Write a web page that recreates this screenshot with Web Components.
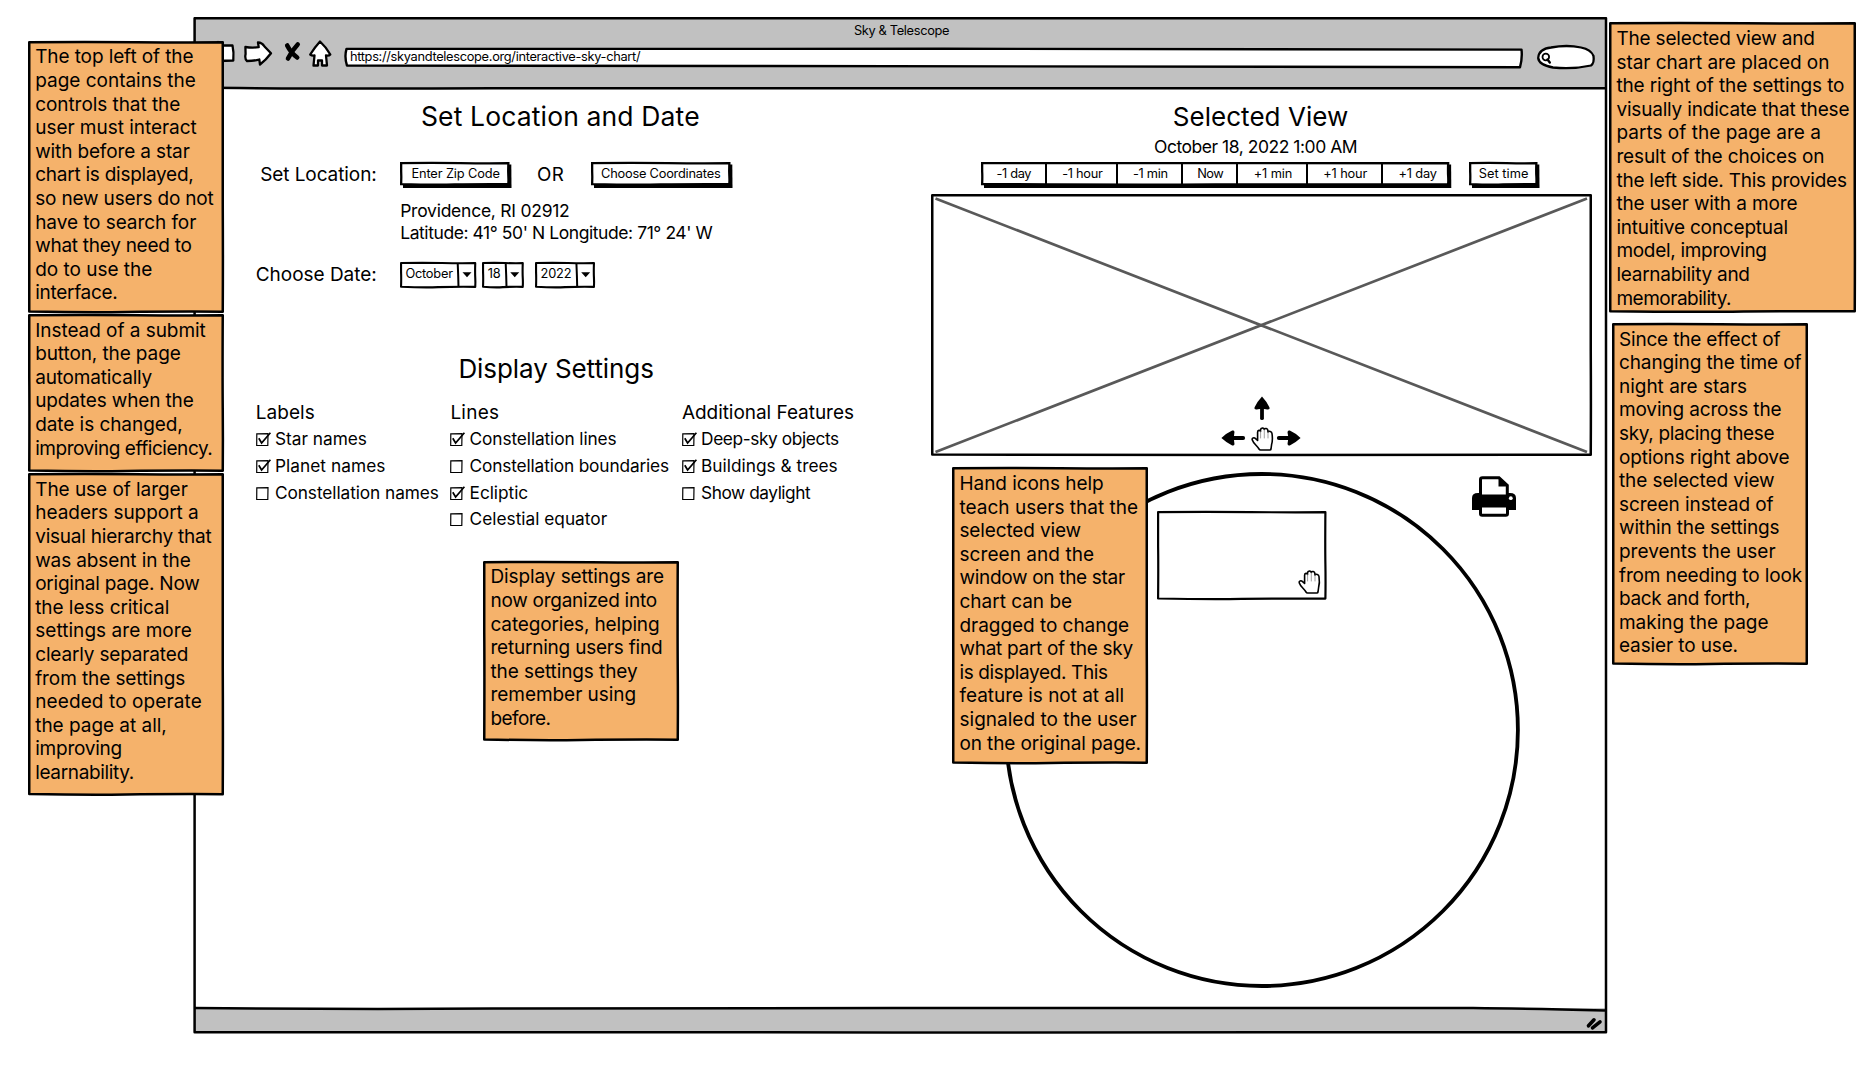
<!DOCTYPE html>
<html lang="en">
<head>
<meta charset="utf-8">
<title>Sky &amp; Telescope wireframe</title>
<style>
html,body{margin:0;padding:0;background:#fff;color:#000;font-family:Inter,"Noto Sans",sans-serif;overflow:hidden}
</style>
</head>
<body>
<wire-board></wire-board>
<script>
// Slightly wavy closed rectangle outline, inset by half a stroke.
function sketchRect(w, h, s) {
  const i = s / 2, r = w - i, b = h - i;
  return `M${i} ${i} Q${w * .3} ${i - .4} ${w * .55} ${i} T${r} ${i + .1} Q${r - .3} ${h * .4} ${r} ${h * .6} T${r} ${b - .1} Q${w * .7} ${b - .3} ${w * .5} ${b + .2} T${i} ${b - .2} Q${i + .3} ${h * .6} ${i} ${h * .4} Z`;
}
function define(name, render) {
  customElements.define(name, class extends HTMLElement {
    connectedCallback() {
      if (this.shadowRoot) return;
      this.attachShadow({ mode: 'open' }).innerHTML = render(this, k => this.getAttribute(k));
    }
  });
}

// One line of text tracked to a given width.
customElements.define('fit-text', class extends HTMLElement {
  connectedCallback() {
    if (this.shadowRoot) return;
    const w = +this.getAttribute('w'), size = this.getAttribute('size') || 19, lh = +(this.getAttribute('lh') || 23.6);
    const drop = +(this.getAttribute('drop') || 1.4);
    this.attachShadow({ mode: 'open' }).innerHTML =
      `<style>:host{display:block;flex:none;width:${w}px;height:${lh}px;font-size:${size}px;line-height:${lh + drop}px;white-space:nowrap}span{display:inline-block}</style><span><slot></slot></span>`;
    const span = this.shadowRoot.querySelector('span');
    const natural = span.getBoundingClientRect().width;
    const n = this.textContent.length;
    if (n > 1) span.style.letterSpacing = ((w + 1.6 - natural) / (n - 1)).toFixed(3) + 'px';
  }
});

define('sketch-box', (el, a) => {
  const w = +a('w'), h = +a('h'), s = +(a('stroke') || 2.5);
  return `<style>:host{display:block;flex:none;position:relative;width:${w}px;height:${h}px}
    svg{position:absolute;inset:0;overflow:visible}div{position:relative}</style>
    <svg width="${w}" height="${h}"><path d="${sketchRect(w, h, s)}" fill="${a('fill') || '#fff'}" stroke="#000" stroke-width="${s}" stroke-linejoin="round"/></svg>
    <div><slot></slot></div>`;
});

define('sticky-note', (el, a) => {
  const lines = el.textContent.trim().split('\n').map(l => l.trim().split('|'));
  return `<style>:host{position:absolute;left:${a('x')}px;top:${a('y')}px;display:block}
    .t{padding:3.7px 0 0 7.3px}</style>
    <sketch-box w="${a('w')}" h="${a('h')}" fill="#f5b26b"><div class="t">${lines.map(l => `<fit-text w="${l[1]}">${l[0]}</fit-text>`).join('')}</div></sketch-box>`;
});

define('sketch-button', (el, a) => {
  const w = +a('w'), parts = el.textContent.split(';').map(p => p.split('|'));
  const segs = parts.length > 1;
  return `<style>:host{display:block;flex:none;position:relative;width:${w}px;height:26px}
    svg{position:absolute;inset:0;overflow:visible}
    .r{position:relative;display:flex;height:23px;width:${w - 2.5}px}
    .s{display:flex;justify-content:center;flex:none}.s:not(:last-child){border-right:2.2px solid #000;box-sizing:border-box;margin-top:1px}
    .s:not(:last-child) fit-text{margin-top:-1px}.solo{flex:1}</style>
    <svg width="${w}" height="26"><path d="M3 2.5H${w - .2}L${w} 26H3Z"/><path d="${sketchRect(w - 2, 23.4, 2.3)}" fill="#fff" stroke="#000" stroke-width="2.3"/></svg>
    <div class="r">${parts.map(p => `<div class="s ${segs ? '' : 'solo'}" style="${segs ? `width:${p[2]}px` : ''}"><fit-text drop="0.4" size="12.8" lh="23" w="${p[1]}">${p[0]}</fit-text></div>`).join('')}</div>`;
});

define('sketch-select', (el, a) => {
  const w = +a('w'), d = +a('split');
  return `<style>:host{display:block;flex:none;width:${w}px;height:26px}.r{display:flex;align-items:flex-start}
    fit-text{margin-left:5.2px}.x{position:absolute;inset:0}</style>
    <sketch-box w="${w}" h="26" stroke="2.1"><div class="r"><fit-text size="12.8" lh="22" drop="2" w="${a('tw')}">${el.textContent}</fit-text></div><svg class="x" width="${w}" height="26"><path d="M${d - .6} 1 Q${d} 14 ${d + .2} 25" fill="none" stroke="#000" stroke-width="2"/><path d="M${(d + w) / 2 - 4.8} 10.3h9l-4.5 5z"/></svg></sketch-box>`;
});

define('check-row', (el, a) => `<style>:host{display:flex;height:26.7px;align-items:flex-start}svg{flex:none;overflow:visible;margin:8px 6.2px 0 0}</style>
  <svg width="13" height="13"><path d="M.8 .8 12 .6 11.8 12.5 .7 12.3Z" fill="#fff" stroke="#000" stroke-width="1.2"/>${a('on') !== null ? '<path d="M2.8 5.2 5.6 10 14.4 -.2" fill="none" stroke="#000" stroke-width="1.7"/>' : ''}</svg>
  <fit-text size="17.3" lh="26.7" w="${a('w')}">${el.innerHTML}</fit-text>`);

define('hand-icon', () => `<style>:host{display:block;width:23px;height:24px}svg{overflow:visible;display:block}</style>
  <svg width="23" height="24" fill="none" stroke="#000" stroke-width="1.6" stroke-linejoin="round" stroke-linecap="round">
  <path fill="#fff" d="M6.6 13.5V5.2C6.6 3 9.2 2.8 9.5 4.4V3C9.7 .7 12.8 .4 13.2 2.4C14 .9 16.8 1.3 16.9 3.6V5C18 3.5 20.8 4.4 21 6.5C21.5 10 21.7 14 20.6 17.5L20 22Q19.8 23 18.8 23H9.5Q8.6 23 8 22C6 18.5 2.6 17 1.2 12.8C.8 11 3 10.2 4.3 11.4Z"/>
  <path stroke-width=".7" stroke="#777" d="M9.6 4.5V11M13.3 3V11M17 5V11"/></svg>`);

define('pan-arrow', (el, a) => `<style>:host{display:block;width:24px;height:16px;transform:rotate(${a('deg')}deg)}svg{display:block;overflow:visible}</style>
  <svg width="24" height="16"><path d="M22.2 8H12" stroke="#000" stroke-width="3.8" stroke-linecap="round"/><path d="M.4 8Q5.5 3.2 11.2 .6 14.2 -.4 13.2 4 12.4 8 13.2 12 14.2 16.2 11.2 15.4 5.5 12.8 .4 8Z"/></svg>`);

define('print-icon', () => `<style>:host{display:block;width:44px;height:41px}svg{display:block}</style>
  <svg width="44" height="41"><path d="M0 34V22Q0 17 6 17H38Q44 17 44 22V34H35V30H9V34Z"/>
  <path d="M8.5 20V3.5Q8.5 1.7 10.5 1.7H27L35.3 9.5V20Z" fill="#fff" stroke="#000" stroke-width="3"/><path d="M26.5 1.5V10.5H36Z"/>
  <path d="M1 20.5H43V30H1Z"/><path d="M8.5 30H35.5V37.5Q35.5 39.2 33.8 39.2H10.2Q8.5 39.2 8.5 37.5Z" fill="#fff" stroke="#000" stroke-width="3"/><path d="M7 20.5H37V30.5H7Z"/>
  <circle cx="38.8" cy="22.2" r="1.9" fill="#fff"/></svg>`);

define('browser-header', () => `<style>:host{display:block;height:72px}
  .title-row{display:flex;justify-content:center;height:21px;padding:3px 0 0 0}
  .bar{display:flex;align-items:flex-start;margin-top:1px}
  svg{display:block;flex:none;overflow:visible}
  .url{margin:-2.8px 0 0 12.5px;position:relative;width:1179px;height:22px}
  .url svg{position:absolute;inset:0}.url fit-text{position:relative;margin:7.2px 0 0 6px}</style>
  <div class="title-row"><fit-text size="12.8" lh="19" drop="2.4" w="94">Sky &amp; Telescope</fit-text></div>
  <div class="bar">
    <svg style="margin:0 0 0 17px" width="24" height="24" fill="#fff" stroke="#000" stroke-width="2.3" stroke-linejoin="round"><path d="M-3 11 8 0V3.5H22.5Q24 10 23.3 18.5L8 19V22Z"/></svg>
    <svg style="margin:-1px 0 0 10px" width="28" height="25" fill="#fff" stroke="#000" stroke-width="2.3" stroke-linejoin="round"><path d="M1.4 6Q8 7 14.7 6.2 L14 1.5Q18 1.5 20.5 5.5 L27 12.3Q22 19 16 23.5 L15.3 18.5Q10 20 3 20 Q.5 18 1.6 13Z"/></svg>
    <svg style="margin:0 0 0 12px" width="17" height="20" fill="none" stroke="#000" stroke-width="4.6" stroke-linecap="round"><path d="M3.2 3.5Q7 11 13.2 15.500"/><path d="M13.700 2.500Q8 8.500 4 16.500"/></svg>
    <svg style="margin:-1px 0 0 8px" width="22" height="26" fill="#fff" stroke="#000" stroke-width="2.3" stroke-linejoin="round"><path d="M11 .5Q6 6 1.2 13.5 3 15 5.5 14.5 L4.5 24.5H9V19.5H13V24.5H18L17 14.5Q20 15 21.3 13.5 17 6 11 .5Z"/></svg>
    <div class="url"><svg width="1179" height="22"><path d="M2.5 8.9Q300 8.3 600 8.8T1177.5 9.6Q1178.5 18 1176 27.2Q700 25.5 400 26T3 25.6Q.2 17 2.5 8.9Z" fill="#fff" stroke="#000" stroke-width="2.4" stroke-linejoin="round"/></svg><fit-text size="12.8" lh="19" w="289">https://skyandtelescope.org/interactive-sky-chart/</fit-text></div>
    <svg style="margin:2.6px 0 0 14.5px" width="58" height="24"><path d="M1.2 13C1.5 7 6 3.5 14 2.5Q30 -.5 44 2.5Q54 4.5 56.5 11Q57.5 18 54 20.5Q36 24.5 16 22.5Q2 20 1.2 13Z" fill="#fff" stroke="#000" stroke-width="2.3"/><circle cx="8.8" cy="12" r="3.3" fill="none" stroke="#000" stroke-width="1.8"/><path d="M10.5 14.5 12.8 17.5" stroke="#000" stroke-width="2.4" stroke-linecap="round"/></svg>
  </div>`);

define('settings-panel', () => `<style>:host{display:block;box-sizing:border-box;width:737.3px;padding:8.5px 0 0 62.3px;flex:none}
  .row{display:flex;align-items:flex-start;height:26px}
  .cols{display:flex;margin-top:14.6px;align-items:flex-start}.cols>div{flex:none}</style>
  <fit-text size="26.5" lh="36" w="277" style="margin-left:165.3px">Set Location and Date</fit-text>
  <div class="row" style="margin-top:28.6px"><fit-text style="margin-left:4.5px" w="115" lh="25" drop="1.2">Set Location:</fit-text>
    <sketch-button style="margin-left:25.2px" w="111.5">Enter Zip Code|87</sketch-button>
    <fit-text style="margin-left:25.2px" size="18.8" lh="24" w="25.2">OR</fit-text>
    <sketch-button style="margin-left:28.3px" w="141.5">Choose Coordinates|118</sketch-button></div>
  <div style="margin:10.5px 0 0 144.5px"><fit-text size="17.5" lh="22.3" w="168">Providence, RI 02912</fit-text>
  <fit-text size="17.5" lh="22.3" w="311">Latitude: 41° 50' N Longitude: 71° 24' W</fit-text></div>
  <div class="row" style="margin-top:18.2px"><fit-text w="119.5" lh="24">Choose Date:</fit-text>
    <sketch-select style="margin-left:25px" w="76.3" split="58.3" tw="46">October</sketch-select>
    <sketch-select style="margin-left:6px" w="41.8" split="24.3" tw="11.5">18</sketch-select>
    <sketch-select style="margin-left:11px" w="60" split="42" tw="29.5">2022</sketch-select></div>
  <fit-text size="26" lh="36" w="194" style="margin:61.8px 0 0 202.7px">Display Settings</fit-text>
  <div class="cols">
    <div style="width:194.7px"><fit-text lh="25" drop="1.3" w="57.5">Labels</fit-text>
      <check-row on w="90.5">Star names</check-row><check-row on w="109">Planet names</check-row><check-row w="162.5">Constellation names</check-row></div>
    <div style="width:231.5px"><fit-text lh="25" drop="1.3" w="47">Lines</fit-text>
      <check-row on w="145.5">Constellation lines</check-row><check-row w="198">Constellation boundaries</check-row><check-row on w="57">Ecliptic</check-row><check-row w="136">Celestial equator</check-row></div>
    <div><fit-text lh="25" drop="1.3" w="170.5">Additional Features</fit-text>
      <check-row on w="136.5">Deep-sky objects</check-row><check-row on w="135">Buildings &amp; trees</check-row><check-row w="108">Show daylight</check-row></div>
  </div>`);

define('sky-view', () => `<style>:host{display:block;padding-top:8.5px;width:662px;flex:none}
  .row{display:flex;margin:4.6px 0 0 50.5px}
  .pic{position:relative;margin-top:6px;height:262px}.pic>svg{position:absolute;inset:0}
  .chart{position:relative;height:540px}.chart>svg{position:absolute;left:0;top:0;overflow:visible}.abs{position:absolute}</style>
  <fit-text size="26" lh="36" w="174" style="margin-left:242px">Selected View</fit-text>
  <fit-text size="17.5" lh="24" w="202" style="margin-left:223.3px">October 18, 2022 1:00 AM</fit-text>
  <div class="row"><sketch-button w="470.3">-1 day|33.5|66;-1 hour|39|71;-1 min|33.5|65;Now|25|55;+1 min|37|70;+1 hour|42.5|74.7;+1 day|37|68</sketch-button>
    <sketch-button style="margin-left:17.3px" w="70.5">Set time|48</sketch-button></div>
  <div class="pic"><sketch-box w="661" h="262"></sketch-box>
    <svg width="661" height="262"><path d="M4.500 4.500 656 258M4.500 258 656 4.500" stroke="#595959" stroke-width="2.7"/></svg>
    <pan-arrow class="abs" deg="90" style="left:319.700px;top:205.700px"></pan-arrow>
    <pan-arrow class="abs" deg="0" style="left:290.600px;top:236px"></pan-arrow>
    <pan-arrow class="abs" deg="180" style="left:346px;top:236px"></pan-arrow>
    <hand-icon class="abs" style="left:320.500px;top:232.700px"></hand-icon></div>
  <div class="chart"><svg width="661" height="540"><circle cx="330.900" cy="274" r="256" fill="#fff" stroke="#000" stroke-width="3.8"/></svg>
    <sketch-box class="abs" style="position:absolute;left:226.700px;top:55px" w="169.5" h="88.8" stroke="2.2"></sketch-box>
    <hand-icon class="abs" style="left:367.200px;top:114px"></hand-icon>
    <print-icon class="abs" style="left:541.500px;top:19.700px"></print-icon></div>`);

define('browser-window', () => `<style>:host{display:block;position:relative;width:1415px;height:1018px;overflow:hidden}
  .frame{position:absolute;inset:0}.c{position:relative}.main{display:flex}</style>
  <svg class="frame" width="1415" height="1018"><path d="M1 1H1412V71H1Z" fill="#c1c1c1"/><path d="M1 991H1412V1014H1Z" fill="#c1c1c1"/>
  <g fill="none" stroke="#000" stroke-width="2.5" stroke-linejoin="round"><path d="M1.6 1.2 H1413 V1015.300 Q1000 1016 700 1015.400 T1.600 1015.200Z"/>
  <path d="M1 70.500 Q100 72 300 71.300 H1412.500"/><path d="M1 991Q160 992.500 300 991.500T700 991 H1280 Q1330 991.500 1412 993.600"/></g>
  <path d="M1395.500 1008.800 1401 1002.800M1399.500 1010.800 1407 1004.800" stroke="#000" stroke-width="3.6" stroke-linecap="round"/></svg>
  <div class="c"><browser-header></browser-header><div class="main"><settings-panel></settings-panel><sky-view></sky-view></div></div>`);

define('wire-board', () => `<style>:host{display:block;position:relative;width:1866px;height:1082px;overflow:hidden;background:#fff}
  browser-window{margin:17.4px 0 0 193.400px}.pad{display:flow-root}</style>
  <div class="pad"><browser-window></browser-window></div>
  <sticky-note x="27.9" y="40.7" w="196" h="272">The top left of the|156.7
page contains the|159
controls that the|143.5
user must interact|160
with before a star|153
chart is displayed,|157
so new users do not|177
have to search for|159.5
what they need to|155
do to use the|115.5
interface.|81</sticky-note>
  <sticky-note x="27.9" y="314" w="196" h="158">Instead of a submit|169
button, the page|144
automatically|115.5
updates when the|157
date is changed,|146
improving efficiency.|176</sticky-note>
  <sticky-note x="27.9" y="473.2" w="196" h="322.5">The use of larger|151
headers support a|162
visual hierarchy that|175
was absent in the|154
original page. Now|163
the less critical|132.5
settings are more|155
clearly separated|151.5
from the settings|148.5
needed to operate|165
the page at all,|130
improving|85.5
learnability.|97.5</sticky-note>
  <sticky-note x="483.2" y="560.7" w="196" h="180">Display settings are|172
now organized into|165
categories, helping|167.5
returning users find|170.5
the settings they|145.5
remember using|144
before.|59</sticky-note>
  <sticky-note x="952.2" y="467.3" w="196" h="297">Hand icons help|142.5
teach users that the|177
selected view|120
screen and the|133
window on the star|164
chart can be|111
dragged to change|168
what part of the sky|172
is displayed. This|147
feature is not at all|163
signaled to the user|175.5
on the original page.|180</sticky-note>
  <sticky-note x="1609.1" y="22.3" w="247" h="290.7">The selected view and|197
star chart are placed on|211.5
the right of the settings to|226.5
visually indicate that these|231.5
parts of the page are a|203
result of the choices on|206.5
the left side. This provides|229
the user with a more|179.5
intuitive conceptual|170
model, improving|149
learnability and|132
memorability.|113.5</sticky-note>
  <sticky-note x="1611.7" y="323" w="196" h="342">Since the effect of|160
changing the time of|181
night are stars|126.5
moving across the|161
sky, placing these|154
options right above|169
the selected view|154
screen instead of|153
within the settings|159
prevents the user|155
from needing to look|181.5
back and forth,|130
making the page|148
easier to use.|117.5</sticky-note>`);
</script>
</body>
</html>
